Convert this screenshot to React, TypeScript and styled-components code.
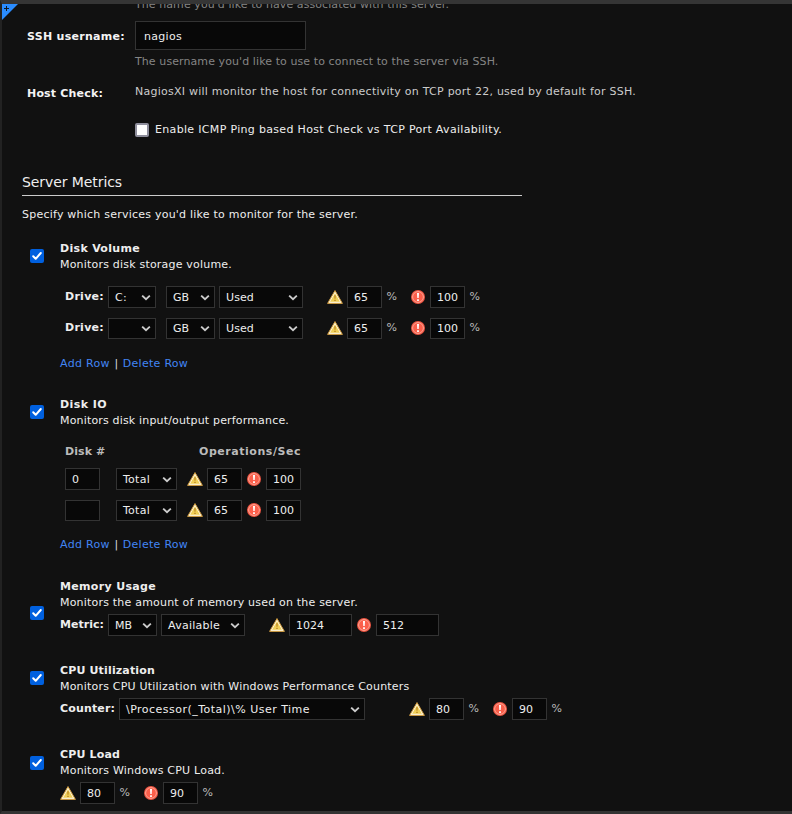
import React from 'react';
import styled, { createGlobalStyle } from 'styled-components';

const GlobalStyle = createGlobalStyle`
  *, *::before, *::after { box-sizing: border-box; }
  body {
    margin: 0;
    background: #111;
    color: #eee;
    font: 11px/16px "DejaVu Sans", Verdana, sans-serif;
    overflow: hidden;
  }
`;

const Window = styled.div`
  position: relative;
  display: flex;
  flex-direction: column;
  width: 792px;
  height: 814px;
  overflow: hidden;
  background: #111;
  border-style: solid;
  border-color: #353535 #111 #333 #222;
  border-width: 4px 0 3px 2px;
`;

const Corner = styled.svg`
  position: absolute;
  left: 0;
  top: 0;
`;

const Credentials = styled.section`
  display: flex;
  flex-direction: column;
  height: 175px;
  margin-top: -7px;
  padding-left: 25px;
`;

const Metrics = styled.section`
  display: flex;
  flex-direction: column;
  padding-left: 20px;
`;

const FieldRow = styled.div<{ $top?: number }>`
  display: grid;
  grid-template-columns: 108px 1fr;
  align-items: start;
  margin-top: ${p => p.$top ?? 0}px;
`;

const FieldBody = styled.div`
  display: flex;
  flex-direction: column;
  align-items: flex-start;
`;

const Text = styled.span<{ $ls?: number }>`
  display: block;
  padding-top: 2px;
  line-height: 14px;
  white-space: pre;
  letter-spacing: ${p => p.$ls ?? 0.2}px;
`;

const HelpText = styled(Text)`
  padding-top: 0;
  line-height: 16px;
  color: #858585;
`;

const SoftText = styled(Text)`
  color: #ccc;
`;

const Label = styled(Text)`
  font-weight: bold;
`;

const FieldLabel = styled(Label)<{ $top?: number }>`
  color: #f4f4f4;
  margin-top: ${p => p.$top ?? 0}px;
`;

const UserInput = styled.div`
  width: 171px;
  height: 29px;
  margin-bottom: 4px;
  padding: 7px 8px 5px;
  background: #080808;
  border: 1px solid #333;
  letter-spacing: 0.3px;
`;

const CheckLine = styled.div`
  display: flex;
  gap: 6px;
  height: 16px;
  margin-top: 22px;
`;

const EmptyCheck = styled.span`
  width: 14px;
  height: 14px;
  margin-top: 2px;
  background: #fff;
  border: 2px solid #8f8f9d;
  border-radius: 2px;
`;

const Heading = styled.h2`
  width: 500px;
  height: 22px;
  margin: 2px 0 10px;
  border-bottom: 1px solid #ccc;
  font-size: 14px;
  line-height: 16px;
  font-weight: normal;
  letter-spacing: -0.08px;
`;

const Service = styled.div<{ $top: number }>`
  display: grid;
  grid-template-columns: 30px 1fr;
  margin-top: ${p => p.$top}px;
  padding-left: 8px;
`;

const CheckSlot = styled.div<{ $top: number }>`
  height: 14px;
  margin-top: ${p => p.$top}px;
`;

const Controls = styled.div<{ $top: number; $indent?: number; $height?: number }>`
  --lift: ${p => (p.$height === 21 ? 1 : 0)}px;
  display: flex;
  align-items: flex-start;
  height: ${p => p.$height ?? 22}px;
  margin-top: ${p => p.$top}px;
  padding-left: ${p => p.$indent ?? 0}px;
`;

const ControlLabel = styled(Label)<{ $width: number }>`
  width: ${p => p.$width}px;
  padding-top: calc(4px - var(--lift));
`;

const SelectBox = styled.div<{ $width: number; $gap?: number }>`
  display: flex;
  align-items: flex-start;
  justify-content: space-between;
  flex: none;
  width: ${p => p.$width}px;
  height: 100%;
  margin-left: ${p => p.$gap ?? 0}px;
  padding: calc(2px - var(--lift)) 4px 0 6px;
  background: #080808;
  border: 1px solid #333;
`;

const Chevron = styled.svg`
  flex: none;
  margin-top: 4px;
`;

const NumberBox = styled.div<{ $width?: number; $gap?: number }>`
  flex: none;
  width: ${p => p.$width ?? 35}px;
  height: 100%;
  margin-left: ${p => p.$gap ?? 0}px;
  padding: calc(3px - var(--lift)) 0 0 6px;
  background: #080808;
  border: 1px solid #333;
`;

const Percent = styled.span`
  width: 12px;
  margin: calc(3px - var(--lift)) 0 0 4.5px;
  color: #bbb;
`;

const IconSlot = styled.span<{ $width: number; $gap: number }>`
  flex: none;
  width: ${p => p.$width}px;
  height: 14px;
  margin: calc(4px - var(--lift)) 0 0 ${p => p.$gap}px;
  line-height: 0;
`;

const RowLinks = styled.div<{ $top: number }>`
  display: flex;
  height: 16px;
  margin-top: ${p => p.$top}px;
`;

const Link = styled.a<{ $ls: number }>`
  color: #4285f4;
  letter-spacing: ${p => p.$ls}px;
`;

const Divider = styled.span`
  width: 13px;
  text-align: center;
  color: #ddd;
`;

const TableHead = styled.div`
  display: flex;
  margin-top: 15px;
  padding-left: 5px;
  color: #bbb;
`;

const HeadCell = styled(Label)<{ $width?: number }>`
  width: ${p => (p.$width ? `${p.$width}px` : 'auto')};
`;

const Check = ({ top }: { top: number }) => (
  <CheckSlot $top={top}>
    <svg width="14" height="14" viewBox="0 0 14 14">
      <rect width="14" height="14" rx="2" fill="#0060df" />
      <path d="M3.2 7.2 5.7 9.8 10.8 4" fill="none" stroke="#fff" strokeWidth="2" strokeLinejoin="round" strokeLinecap="round" />
    </svg>
  </CheckSlot>
);

const Select = ({ width, gap, ls, children }: { width: number; gap?: number; ls?: number; children?: React.ReactNode }) => (
  <SelectBox $width={width} $gap={gap}>
    <Text $ls={ls}>{children}</Text>
    <Chevron width="10" height="9" viewBox="0 0 10 9">
      <path d="M1.8 3.2 5 6.2 8.2 3.2" fill="none" stroke="#ccc" strokeWidth="1.8" strokeLinecap="square" />
    </Chevron>
  </SelectBox>
);

const Warning = ({ gap = 0 }: { gap?: number }) => (
  <IconSlot $width={16} $gap={gap}>
    <svg width="16" height="14" viewBox="0 0 16 14">
      <path d="M8 .6 15.4 13.4H.6Z" fill="#fff8df" stroke="#cf9a3c" strokeWidth="1" strokeLinejoin="round" />
      <path d="M8 3.2 12.9 11.8H3.1Z" fill="#efcf58" />
      <path d="M7.2 5.2h1.6l-.2 3.6H7.4ZM7.2 9.7h1.6v1.4H7.2Z" fill="#c08c28" />
    </svg>
  </IconSlot>
);

const Critical = ({ gap }: { gap: number }) => (
  <IconSlot $width={14} $gap={gap}>
    <svg width="14" height="14" viewBox="0 0 14 14">
      <circle cx="7" cy="7" r="7" fill="#ee5542" />
      <circle cx="7" cy="7" r="5.4" fill="#fb5f4b" stroke="#ffa595" strokeWidth="1" />
      <path d="M6 3h2l-.3 5.1H6.3ZM6.1 9.2h1.8V11H6.1Z" fill="#fff" />
    </svg>
  </IconSlot>
);

const DriveRow = ({ drive, top, height }: { drive?: string; top: number; height: number }) => (
  <Controls $top={top} $indent={5} $height={height}>
    <ControlLabel $width={43} $ls={0.27}>Drive:</ControlLabel>
    <Select width={48}>{drive}</Select>
    <Select width={49} gap={10} ls={0}>GB</Select>
    <Select width={84} gap={4} ls={0.1}>Used</Select>
    <Warning gap={24} />
    <NumberBox $gap={4}>65</NumberBox>
    <Percent>%</Percent>
    <Critical gap={12.5} />
    <NumberBox $gap={5}>100</NumberBox>
    <Percent>%</Percent>
  </Controls>
);

const DiskRow = ({ disk, top, height }: { disk?: string; top: number; height: number }) => (
  <Controls $top={top} $indent={5} $height={height}>
    <NumberBox>{disk}</NumberBox>
    <Select width={61} gap={16} ls={0.26}>Total</Select>
    <Warning gap={10} />
    <NumberBox $gap={4}>65</NumberBox>
    <Critical gap={5} />
    <NumberBox $gap={5}>100</NumberBox>
  </Controls>
);

const Links = ({ top }: { top: number }) => (
  <RowLinks $top={top}>
    <Link $ls={0.3}>Add Row</Link>
    <Divider>|</Divider>
    <Link $ls={0.28}>Delete Row</Link>
  </RowLinks>
);

export default function App() {
  return (
    <Window>
      <GlobalStyle />
      <Credentials>
        <FieldRow>
          <span />
          <HelpText $ls={0.075}>The name you'd like to have associated with this server.</HelpText>
        </FieldRow>
        <FieldRow $top={8}>
          <FieldLabel $top={7} $ls={0.29}>SSH username:</FieldLabel>
          <FieldBody>
            <UserInput>nagios</UserInput>
            <HelpText $ls={0.09}>The username you'd like to use to connect to the server via SSH.</HelpText>
          </FieldBody>
        </FieldRow>
        <FieldRow $top={13}>
          <FieldLabel $top={2} $ls={0.18}>Host Check:</FieldLabel>
          <FieldBody>
            <SoftText $ls={0.244}>NagiosXI will monitor the host for connectivity on TCP port 22, used by default for SSH.</SoftText>
            <CheckLine>
              <EmptyCheck />
              <Text $ls={0.325}>Enable ICMP Ping based Host Check vs TCP Port Availability.</Text>
            </CheckLine>
          </FieldBody>
        </FieldRow>
      </Credentials>

      <Metrics>
        <Heading>Server Metrics</Heading>
        <Text $ls={0.228}>Specify which services you'd like to monitor for the server.</Text>

        <Service $top={18}>
          <Check top={9} />
          <div>
            <Label $ls={0.31}>Disk Volume</Label>
            <Text>Monitors disk storage volume.</Text>
            <DriveRow top={14} height={22} drive="C:" />
            <DriveRow top={10} height={21} />
            <Links top={17} />
          </div>
        </Service>

        <Service $top={24}>
          <Check top={9} />
          <div>
            <Label $ls={0.42}>Disk IO</Label>
            <Text $ls={0.169}>Monitors disk input/output performance.</Text>
            <TableHead>
              <HeadCell $width={134} $ls={0.1}>Disk #</HeadCell>
              <HeadCell $ls={0.54}>Operations/Sec</HeadCell>
            </TableHead>
            <DiskRow top={9} height={22} disk="0" />
            <DiskRow top={10} height={21} />
            <Links top={16} />
          </div>
        </Service>

        <Service $top={25}>
          <Check top={28} />
          <div>
            <Label $ls={0.326}>Memory Usage</Label>
            <Text>Monitors the amount of memory used on the server.</Text>
            <Controls $top={4}>
              <ControlLabel $width={48} $ls={0.03}>Metric:</ControlLabel>
              <Select width={49} ls={0}>MB</Select>
              <Select width={84} gap={4} ls={0.25}>Available</Select>
              <Warning gap={24} />
              <NumberBox $width={63} $gap={4}>1024</NumberBox>
              <Critical gap={5} />
              <NumberBox $width={63} $gap={5}>512</NumberBox>
            </Controls>
          </div>
        </Service>

        <Service $top={26}>
          <Check top={9} />
          <div>
            <Label $ls={0.157}>CPU Utilization</Label>
            <Text $ls={0.2}>Monitors CPU Utilization with Windows Performance Counters</Text>
            <Controls $top={4}>
              <ControlLabel $width={59} $ls={0.146}>Counter:</ControlLabel>
              <Select width={246} ls={0.48}>{'\\Processor(_Total)\\% User Time'}</Select>
              <Warning gap={44} />
              <NumberBox $gap={4}>80</NumberBox>
              <Percent>%</Percent>
              <Critical gap={12.5} />
              <NumberBox $gap={5}>90</NumberBox>
              <Percent>%</Percent>
            </Controls>
          </div>
        </Service>

        <Service $top={26}>
          <Check top={10} />
          <div>
            <Label $ls={0.155}>CPU Load</Label>
            <Text $ls={0.216}>Monitors Windows CPU Load.</Text>
            <Controls $top={4}>
              <Warning />
              <NumberBox $gap={4}>80</NumberBox>
              <Percent>%</Percent>
              <Critical gap={12.5} />
              <NumberBox $gap={5}>90</NumberBox>
              <Percent>%</Percent>
            </Controls>
          </div>
        </Service>
      </Metrics>

      <Corner width="17" height="17" viewBox="0 0 17 17">
        <path d="M0 0H16L0 16Z" fill="#2a8cff" />
        <path d="M2 4.5H7M4.5 2V7" stroke="#101820" strokeWidth="1" />
      </Corner>
    </Window>
  );
}
